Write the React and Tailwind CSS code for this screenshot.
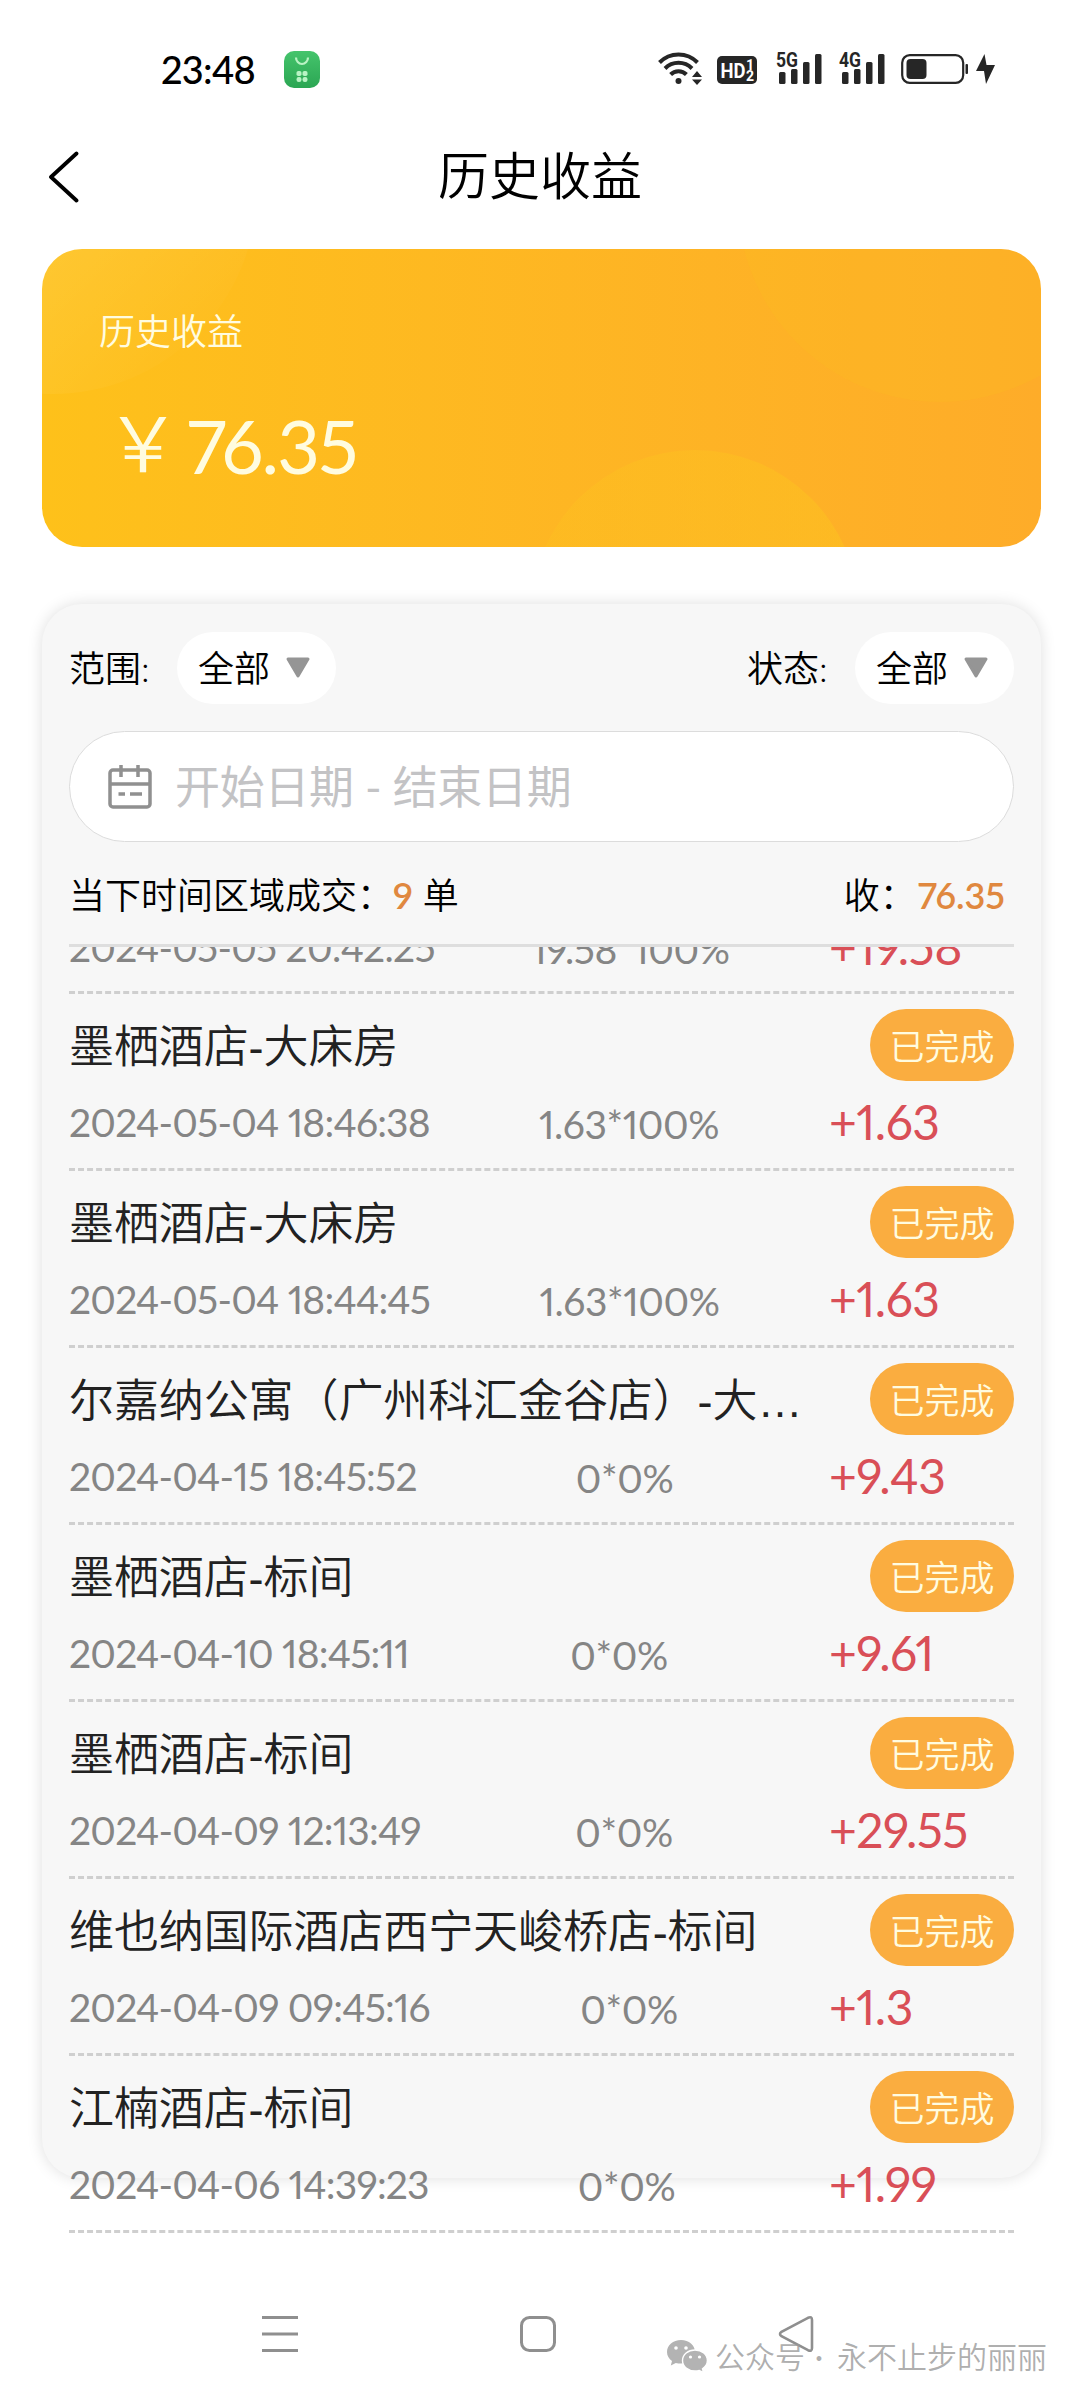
const orders = [
  {
    name: "墨栖酒店-大床房",
    time: "2024-05-04 18:46:38",
    width: 360,
    formula: "1.63*100%",
    amount: "+1.63",
  },
  {
    name: "墨栖酒店-大床房",
    time: "2024-05-04 18:44:45",
    width: 361,
    formula: "1.63*100%",
    amount: "+1.63",
  },
  {
    name: "尔嘉纳公寓（广州科汇金谷店）-大床房",
    time: "2024-04-15 18:45:52",
    width: 351,
    formula: "0*0%",
    amount: "+9.43",
  },
  {
    name: "墨栖酒店-标间",
    time: "2024-04-10 18:45:11",
    width: 340,
    formula: "0*0%",
    amount: "+9.61",
  },
  {
    name: "墨栖酒店-标间",
    time: "2024-04-09 12:13:49",
    width: 350,
    formula: "0*0%",
    amount: "+29.55",
  },
  {
    name: "维也纳国际酒店西宁天峻桥店-标间",
    time: "2024-04-09 09:45:16",
    width: 360,
    formula: "0*0%",
    amount: "+1.3",
  },
  {
    name: "江楠酒店-标间",
    time: "2024-04-06 14:39:23",
    width: 355,
    formula: "0*0%",
    amount: "+1.99",
  },
];

function SignalIcon({ label }) {
  return (
    <svg width="46" height="36" viewBox="0 0 46 36" fill="#262626" overflow="visible">
      <text
        x="0"
        y="16"
        fontSize="21"
        fontWeight="700"
        textLength="22"
        lengthAdjust="spacingAndGlyphs"
        fontFamily="Roboto, sans-serif"
      >
        {label}
      </text>
      <rect x="3" y="21" width="6.5" height="12" rx="1.5" />
      <rect x="15" y="18" width="6.5" height="15" rx="1.5" />
      <rect x="27" y="11" width="6.5" height="22" rx="1.5" />
      <rect x="39" y="3" width="6.5" height="30" rx="1.5" />
    </svg>
  );
}

function StatusBar() {
  return (
    <div className="flex h-[138px] items-start pt-[51px] pr-[84px] pl-[161px]">
      <span className="w-[94px] text-[38px] leading-[36px] font-medium tracking-[-0.8px] whitespace-nowrap text-black">
        23:48
      </span>
      <svg className="ml-[29px]" width="36" height="37" viewBox="0 0 36 37">
        <defs>
          <linearGradient id="bag" x1="0" y1="0" x2="0" y2="1">
            <stop offset="0" stopColor="#45c46c" />
            <stop offset="1" stopColor="#2ba653" />
          </linearGradient>
        </defs>
        <rect width="36" height="37" rx="10" fill="url(#bag)" />
        <path d="M12 6.5a6 6.5 0 0 0 12 0" fill="none" stroke="#b9f3c4" strokeWidth="2.2" />
        <g fill="#b9f3c4">
          <rect x="12.5" y="20" width="5" height="5" rx="1.8" />
          <rect x="18.5" y="20" width="5" height="5" rx="1.8" />
          <rect x="12.5" y="26" width="5" height="5" rx="2.2" />
          <rect x="18.5" y="26" width="5" height="5" rx="2.2" />
        </g>
      </svg>

      <div className="ml-auto flex items-start">
        <svg width="44" height="36" viewBox="0 0 44 36" fill="none" stroke="#262626" strokeWidth="4">
          <path d="M1.5 11.5a26.5 26.5 0 0 1 38 0" />
          <path d="M7 17.5a19 19 0 0 1 27 0" />
          <path d="M12.6 23.5a11 11 0 0 1 15.8 0" />
          <circle cx="20.5" cy="30" r="3" fill="#262626" stroke="none" />
          <path d="M34 26l5-6 5 6zM34 28.5h10l-5 5.5z" fill="#262626" stroke="none" />
        </svg>
        <svg className="ml-[15px]" width="40" height="36" viewBox="0 0 40 36">
          <rect y="5" width="40" height="28" rx="5" fill="#262626" />
          <g fill="#fff" fontFamily="Roboto, sans-serif" fontWeight="700">
            <text x="3.5" y="26.5" fontSize="20" textLength="25" lengthAdjust="spacingAndGlyphs">
              HD
            </text>
            <text x="29.5" y="18.5" fontSize="14">
              1
            </text>
            <text x="29" y="30" fontSize="14">
              2
            </text>
          </g>
        </svg>
        <div className="ml-[19px]">
          <SignalIcon label="5G" />
        </div>
        <div className="ml-[17px]">
          <SignalIcon label="4G" />
        </div>
        <svg className="ml-[16px]" width="67" height="36" viewBox="0 0 67 36">
          <rect x="1.2" y="4.2" width="61" height="27.6" rx="7.5" fill="none" stroke="#262626" strokeWidth="2.2" />
          <rect x="5.5" y="8" width="20" height="20" rx="4" fill="#262626" />
          <rect x="64.5" y="13" width="2.5" height="10" rx="1" fill="#262626" />
        </svg>
        <svg className="ml-[7px]" width="21" height="36" viewBox="0 0 21 36">
          <path d="M9.5 3L1 20h8l2 13 9-19h-8.5L9.5 3z" fill="#262626" />
        </svg>
      </div>
    </div>
  );
}

function Header() {
  return (
    <div className="flex h-[111px] items-start px-[48px]">
      <svg className="mt-[13px]" width="32" height="52" viewBox="0 0 32 52">
        <path
          d="M28.5 2.5L3 26l25.5 23.5"
          fill="none"
          stroke="#000"
          strokeWidth="3.8"
          strokeLinecap="round"
          strokeLinejoin="round"
        />
      </svg>
      <h1 className="mr-[32px] flex-1 text-center text-[51px] leading-[75px] font-[350] text-black">历史收益</h1>
    </div>
  );
}

function BalanceCard() {
  return (
    <div className="relative mr-[39px] ml-[42px] h-[298px] overflow-hidden rounded-[40px] bg-linear-to-r from-[#fec11a] to-[#feac29]">
      <svg className="absolute inset-0" width="999" height="298" viewBox="0 0 999 298">
        <defs>
          <linearGradient id="corner" x1="0" y1="0" x2="1" y2="1">
            <stop offset="0.5" stopColor="#fff" stopOpacity="0.12" />
            <stop offset="0.9" stopColor="#fff" stopOpacity="0" />
          </linearGradient>
          <linearGradient id="blob" x1="0" y1="0" x2="1" y2="0">
            <stop offset="0" stopColor="#fcc41f" stopOpacity="0.3" />
            <stop offset="1" stopColor="#fcc41f" stopOpacity="0.5" />
          </linearGradient>
        </defs>
        <circle cx="10" cy="-60" r="205" fill="url(#corner)" />
        <circle cx="653" cy="365" r="164" fill="url(#blob)" />
        <circle cx="898" cy="-49" r="202" fill="#fcc41f" fillOpacity="0.2" />
      </svg>
      <div className="relative pt-[55px] pl-[57px] text-[#fffce0]">
        <p className="text-[36px] leading-[54px] font-[350]">历史收益</p>
        <p className="mt-[35px] flex items-center pl-[6px] leading-[100px]">
          <span className="pb-[6px] text-[76px] font-[350]">￥</span>
          <span className="ml-[6px] text-[74px] tracking-[-1.8px]">76.35</span>
        </p>
      </div>
    </div>
  );
}

function FilterSelect({ label }) {
  return (
    <div className="flex items-center text-[36px] font-[350] text-black">
      <span className="w-[108px]">{label}:</span>
      <button className="flex h-[72px] w-[159px] items-center rounded-full bg-white pl-[21px]">
        全部
        <svg className="ml-[15px]" width="26" height="22" viewBox="0 0 26 22">
          <path
            d="M3 2h20L13 19z"
            fill="#959595"
            stroke="#959595"
            strokeWidth="3"
            strokeLinejoin="round"
          />
        </svg>
      </button>
    </div>
  );
}

function DateRange() {
  return (
    <div className="mt-[27px] flex h-[111px] items-center rounded-full border border-[#dcdcdc] bg-white pl-[37px]">
      <svg width="46" height="46" viewBox="0 0 46 46" fill="none" stroke="#909090" strokeWidth="3.5">
        <rect x="3" y="6" width="40" height="37" rx="3" />
        <path d="M3 20h40M14 1v12M31 1v12M11.5 30h6.5M23 30h12" />
      </svg>
      <span className="ml-[22px] pt-[2px] text-[45px] tracking-[-0.3px] whitespace-pre text-[#c3c3c5]">
        开始日期 - 结束日期
      </span>
    </div>
  );
}

function OrderDetail({ time, width, formula, amount }) {
  return (
    <div className="flex h-[44px] items-center leading-[44px] whitespace-nowrap">
      <span className="text-[39px] tracking-[-0.8px] text-[#858585]" style={{ width }}>
        {time}
      </span>
      <span className="flex-1 pt-[3px] text-center text-[39px] tracking-[-0.4px] text-[#858585]">{formula}</span>
      <span className="w-[185px] text-[48px] tracking-[-0.5px] text-[#d94f57]">{amount}</span>
    </div>
  );
}

function OrderRow({ order }) {
  return (
    <li className="h-[177px] border-b-3 border-dashed border-[#cfcfcf] pt-[15px]">
      <div className="flex items-center justify-between">
        <h2 className="w-[740px] truncate pt-[6px] font-['Liberation_Sans','Noto_Sans_CJK_SC',sans-serif] text-[45px] leading-[66px] font-[350] tracking-[-0.1px] text-[#222]">
          {order.name}
        </h2>
        <span className="flex h-[72px] w-[144px] items-center justify-center rounded-full bg-[#faad40] pt-[2px] text-[35px] font-[350] text-[#fffce0]">
          已完成
        </span>
      </div>
      <div className="mt-[19px]">
        <OrderDetail {...order} />
      </div>
    </li>
  );
}

function NavBar() {
  return (
    <div className="flex items-start pl-[262px]">
      <svg width="36" height="38" viewBox="0 0 36 38" stroke="#8f8f8f" strokeWidth="3">
        <path d="M0 2.5h36M0 19h36M0 35.5h36" />
      </svg>
      <svg className="ml-[222px]" width="36" height="38" viewBox="0 0 36 38">
        <rect x="1.5" y="2.5" width="33" height="33" rx="8" fill="none" stroke="#8f8f8f" strokeWidth="3" />
      </svg>
      <svg className="ml-[222px]" width="36" height="38" viewBox="0 0 36 38">
        <path
          d="M30 2.8L3.5 16.8Q.5 19 3.5 21.2L30 35.2Q34 37 34 33V5Q34 1 30 2.8z"
          fill="none"
          stroke="#8f8f8f"
          strokeWidth="2.6"
        />
      </svg>
    </div>
  );
}

function Watermark() {
  return (
    <div className="absolute top-[2335px] left-[666px] flex items-center text-[30px] leading-[42px] font-[350] whitespace-pre text-[#999]/80">
      <svg width="42" height="36" viewBox="0 0 42 36" fill="#b3b3b3">
        <path d="M15 2C7 2 1 7.2 1 14c0 3.8 1.9 6.8 5 9l-1.2 4.500 5-2.600c1.600.4 3.400.7 5.200.7C23 25.600 29 20.600 29 14S23 2 15 2z" />
        <path
          d="M29 12c-7 0-12.5 4.7-12.5 10.6S22 33 29 33c1.5 0 3-.2 4.3-.6l4.200 2.300-1-3.900c2.900-2 4.900-4.900 4.900-8.200C41.400 16.700 36 12 29 12z"
          stroke="#fff"
          strokeWidth="1.4"
        />
        <g fill="#fff">
          <circle cx="10" cy="10" r="1.8" />
          <circle cx="20" cy="10" r="1.8" />
          <circle cx="24.5" cy="19" r="1.6" />
          <circle cx="33.5" cy="19" r="1.6" />
        </g>
      </svg>
      <span className="ml-[7px]">公众号</span>
      <span className="w-[32px] pr-[4px] text-center font-medium">·</span>
      <span>永不止步的丽丽</span>
    </div>
  );
}

export default function App() {
  return (
    <div className="relative h-[2400px] w-[1080px] overflow-hidden bg-white font-['Lato','Noto_Sans_CJK_SC',sans-serif] proportional-nums">
      <StatusBar />
      <Header />
      <BalanceCard />

      <div className="mt-[57px] mr-[39px] ml-[42px] h-[1574px] rounded-[40px] bg-[#f7f7f7] px-[27px] pt-[28px] shadow-[0_0_15px_rgba(0,0,0,0.13)]">
        <div className="flex justify-between">
          <FilterSelect label="范围" />
          <FilterSelect label="状态" />
        </div>
        <DateRange />

        <div className="flex h-[102px] items-center justify-between pt-[3px] text-[36px] font-[350] text-black">
          <p className="flex items-center">
            当下时间区域成交：
            <span className="mr-[10px] font-semibold text-[#e0883f]">9</span>单
          </p>
          <p className="flex items-center pr-[9px]">
            收：<span className="ml-[2px] font-semibold text-[#e0883f]">76.35</span>
          </p>
        </div>

        <div className="border-t-3 border-[#dedede]">
          <div className="flex h-[47px] flex-col justify-end overflow-hidden border-b-3 border-dashed border-[#cfcfcf] pb-[22px]">
            <OrderDetail time="2024-05-05 20:42:25" width={363} formula="19.58*100%" amount="+19.58" />
          </div>
          <ul>
            {orders.map((order) => (
              <OrderRow key={order.time} order={order} />
            ))}
          </ul>
        </div>
      </div>

      <div className="mt-[137px]">
        <NavBar />
      </div>
      <Watermark />
    </div>
  );
}
